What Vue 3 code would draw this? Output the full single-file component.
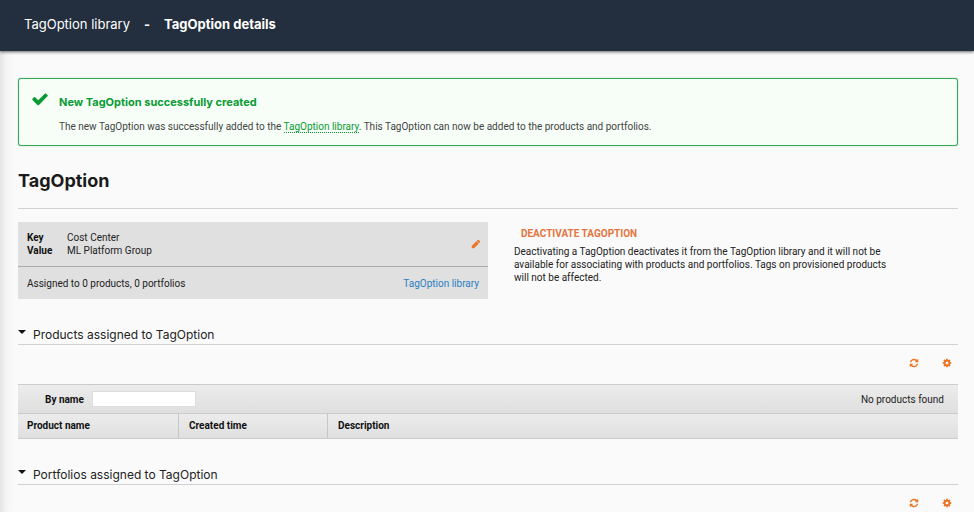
<script setup>
import { ref } from 'vue'

const tagOption = ref({
  key: 'Cost Center',
  value: 'ML Platform Group',
  products: 0,
  portfolios: 0
})

const sections = ref([
  {
    id: 'products',
    title: 'Products assigned to TagOption',
    empty: 'No products found',
    columns: ['Product name', 'Created time', 'Description'],
    filter: '',
    open: true
  },
  {
    id: 'portfolios',
    title: 'Portfolios assigned to TagOption',
    columns: [],
    open: true
  }
])

// expand / collapse a section
const toggle = (section) => {
  section.open = !section.open
}
</script>

<template>
  <div class="page">
    <header class="topbar">
      <a href="#" class="crumb">TagOption library</a>
      <span class="dash">-</span>
      <span class="current">TagOption details</span>
    </header>

    <main class="content">
      <section class="alert" role="status">
        <svg class="check" viewBox="0 0 1792 1792" aria-hidden="true">
          <path d="M1671 566q0 40-28 68l-724 724-136 136q-28 28-68 28t-68-28l-136-136-362-362q-28-28-28-68t28-68l136-136q28-28 68-28t68 28l294 295 656-657q28-28 68-28t68 28l136 136q28 28 28 68z" />
        </svg>
        <div>
          <h2 class="alert-title">New TagOption successfully created</h2>
          <p class="alert-text">
            The new TagOption was successfully added to the <a href="#">TagOption library</a>. This TagOption can now be added to the products and portfolios.
          </p>
        </div>
      </section>

      <h1 class="title">TagOption</h1>

      <div class="overview">
        <div class="card">
          <div class="card-main">
            <dl class="pairs">
              <dt>Key</dt>
              <dd>{{ tagOption.key }}</dd>
              <dt>Value</dt>
              <dd>{{ tagOption.value }}</dd>
            </dl>
            <button type="button" class="icon-btn" aria-label="Edit">
              <svg viewBox="0 0 1792 1792" aria-hidden="true">
                <path d="M960 416l416 416-832 832h-416v-416zm683 96q0 53-37 90l-166 166-416-416 166-165q36-38 90-38 53 0 91 38l235 234q37 39 37 91z" />
              </svg>
            </button>
          </div>
          <div class="card-foot">
            <span>Assigned to {{ tagOption.products }} products, {{ tagOption.portfolios }} portfolios</span>
            <a href="#">TagOption library</a>
          </div>
        </div>

        <div class="deactivate">
          <button type="button" class="deactivate-btn">DEACTIVATE TAGOPTION</button>
          <p>
            Deactivating a TagOption deactivates it from the TagOption library and it will not be available for associating with products and portfolios. Tags on provisioned products will not be affected.
          </p>
        </div>
      </div>

      <section v-for="section in sections" :key="section.id" class="assigned">
        <h2 class="assigned-title">
          <button type="button" :aria-expanded="section.open" @click="toggle(section)">
            <span class="caret" :class="{ closed: !section.open }"></span>{{ section.title }}
          </button>
        </h2>

        <div v-show="section.open">
          <div class="tools">
            <button type="button" class="icon-btn" aria-label="Refresh">
              <svg viewBox="0 0 1792 1792" aria-hidden="true">
                <path d="M1639 1056q0 5-1 7-64 268-268 434.500t-478 166.500q-146 0-282.500-55t-243.500-157l-129 129q-19 19-45 19t-45-19-19-45v-448q0-26 19-45t45-19h448q26 0 45 19t19 45-19 45l-137 137q71 66 161 102t187 36q134 0 250-65t186-179q11-17 53-117 8-23 30-23h192q13 0 22.500 9.500t9.500 22.500zm25-800v448q0 26-19 45t-45 19h-448q-26 0-45-19t-19-45 19-45l138-138q-148-137-349-137-134 0-250 65t-186 179q-11 17-53 117-8 23-30 23h-199q-13 0-22.500-9.500t-9.500-22.500v-7q65-268 270-434.500t480-166.500q146 0 284 55.500t245 156.500l130-129q19-19 45-19t45 19 19 45z" />
              </svg>
            </button>
            <button type="button" class="icon-btn" aria-label="Settings">
              <svg viewBox="0 0 1792 1792" aria-hidden="true">
                <path d="M1152 896q0-106-75-181t-181-75-181 75-75 181 75 181 181 75 181-75 75-181zm512-109v222q0 12-8 23t-20 13l-185 28q-19 54-39 91 35 50 107 138 10 12 10 25t-9 23q-27 37-99 108t-94 71q-12 0-26-9l-138-108q-44 23-91 38-16 136-29 186-7 28-36 28h-222q-14 0-24.500-8.500t-11.500-21.500l-28-184q-49-16-90-37l-141 107q-10 9-25 9-14 0-25-11-126-114-165-168-7-10-7-23 0-12 8-23 15-21 51-66.500t54-70.500q-27-50-41-99l-183-27q-13-2-21-12.500t-8-23.500v-222q0-12 8-23t19-13l186-28q14-46 39-92-40-57-107-138-10-12-10-24 0-10 9-23 26-36 98.500-107.500t94.500-71.500q13 0 26 10l138 107q44-23 91-38 16-136 29-186 7-28 36-28h222q14 0 24.500 8.500t11.500 21.500l28 184q49 16 90 37l142-107q9-9 24-9 13 0 25 10 129 119 165 170 7 8 7 22 0 12-8 23-15 21-51 66.500t-54 70.500q26 50 41 98l183 28q13 2 21 12.500t8 23.500z" />
              </svg>
            </button>
          </div>

          <template v-if="section.columns.length">
            <div class="filter">
              <label :for="section.id + '-name'">By name</label>
              <input :id="section.id + '-name'" v-model="section.filter" type="text" />
              <span class="count">{{ section.empty }}</span>
            </div>
            <table class="grid">
              <thead>
                <tr>
                  <th v-for="column in section.columns" :key="column" scope="col">{{ column }}</th>
                </tr>
              </thead>
            </table>
          </template>
        </div>
      </section>
    </main>
  </div>
</template>

<style>
body {
  background: #fafafa;
}
</style>

<style scoped>
.page {
  min-height: 100vh;
  background: linear-gradient(to right, #e4e4e4, #f4f4f4 6px, #fafafa 14px);
  color: #222;
  font-family: Roboto, "Liberation Sans", sans-serif;
  font-size: 10px;
  line-height: 13px;
}

h1,
h2,
p,
dl,
dd {
  margin: 0;
}

h1,
h2,
.topbar {
  font-family: Inter, "Liberation Sans", sans-serif;
}

button {
  padding: 0;
  border: 0;
  background: none;
  color: inherit;
  font: inherit;
  cursor: pointer;
}

a {
  color: #2a7fc1;
  text-decoration: none;
}

.topbar {
  display: flex;
  gap: 14px;
  align-items: center;
  height: 51px;
  padding: 0 24px 4px;
  box-sizing: border-box;
  background: #232f3e;
  box-shadow: 0 1px 3px rgba(0, 0, 0, 0.6);
  color: #fff;
  font-size: 13px;
  line-height: 18px;
}

.crumb {
  color: #fff;
}

.current,
.dash {
  font-weight: 700;
}

.content {
  padding: 27px 16px 0 18px;
}

.alert {
  display: flex;
  gap: 10px;
  padding: 11px 12px 12px;
  border: 1px solid #2fae56;
  border-radius: 3px;
  background: #f6fef7;
  box-shadow: 0 0 1px #2fae56;
}

.check {
  flex: none;
  width: 18px;
  height: 18px;
  fill: #0a9a33;
}

.alert-title {
  padding-top: 4px;
  color: #0a9a33;
  font-size: 11px;
  font-weight: 700;
  line-height: 16px;
}

.alert-text {
  padding-top: 10px;
  color: #444;
}

.alert-text a {
  border-bottom: 1px dotted #0a9a33;
  color: #0a9a33;
}

.title {
  padding: 23px 0 15px;
  border-bottom: 1px solid #d2d2d2;
  color: #1b1b1b;
  font-size: 18px;
  font-weight: 700;
  line-height: 24px;
}

.overview {
  display: flex;
  gap: 26px;
  padding-top: 13px;
}

.card {
  flex: 0 0 50%;
  background: #e0e0e0;
}

.card-main,
.card-foot {
  display: flex;
  align-items: center;
  justify-content: space-between;
  padding: 9px;
}

.card-main {
  padding-right: 7px;
  border-bottom: 1px solid #aaa;
}

.card-foot {
  padding-top: 10px;
}

.pairs {
  display: grid;
  grid-template-columns: 40px auto;
}

.pairs dt {
  color: #111;
  font-weight: 700;
}

.icon-btn {
  display: block;
  color: #eb7426;
}

.icon-btn svg {
  display: block;
  width: 10px;
  height: 10px;
  fill: currentColor;
}

.deactivate {
  max-width: 380px;
  padding-top: 5px;
}

.deactivate-btn {
  padding: 0 7px;
  color: #e47440;
  font-weight: 700;
}

.deactivate p {
  padding-top: 5px;
}

.assigned {
  padding-top: 27px;
}

.assigned-title {
  border-bottom: 1px solid #d2d2d2;
  font-size: 12px;
  font-weight: 400;
  line-height: 18px;
}

.assigned-title button {
  display: flex;
  gap: 7px;
}

.caret {
  margin-top: 4px;
  border: 4px solid transparent;
  border-top-color: #111;
  border-bottom-width: 0;
  align-self: flex-start;
}

.caret.closed {
  transform: rotate(-90deg);
}

.tools {
  display: flex;
  gap: 23px;
  justify-content: flex-end;
  padding: 13px 6px 0;
}

.filter {
  display: flex;
  gap: 8px;
  align-items: center;
  margin-top: 16px;
  padding: 6px 14px 6px 27px;
  border-top: 1px solid #cbcbcb;
  background: linear-gradient(#ececec, #dfdfdf);
}

.filter label {
  color: #111;
  font-weight: 700;
}

.filter input {
  width: 104px;
  height: 16px;
  padding: 0 4px;
  border: 1px solid #ddd;
  box-sizing: border-box;
  background: #fff;
  font: inherit;
}

.count {
  margin-left: auto;
}

.grid {
  width: 100%;
  border-collapse: separate;
  border-spacing: 0;
  border-top: 1px solid #cbcbcb;
  border-bottom: 1px solid #cbcbcb;
  background: linear-gradient(#ececec, #dfdfdf);
  table-layout: fixed;
}

.grid th {
  box-sizing: border-box;
  padding: 5px 10px 6px;
  color: #111;
  font-weight: 700;
  text-align: left;
}

.grid th:first-child {
  width: 161px;
  padding-left: 9px;
}

.grid th:nth-child(2) {
  width: 149px;
}

.grid th:not(:last-child) {
  border-right: 1px solid #c6c6c6;
}
</style>
